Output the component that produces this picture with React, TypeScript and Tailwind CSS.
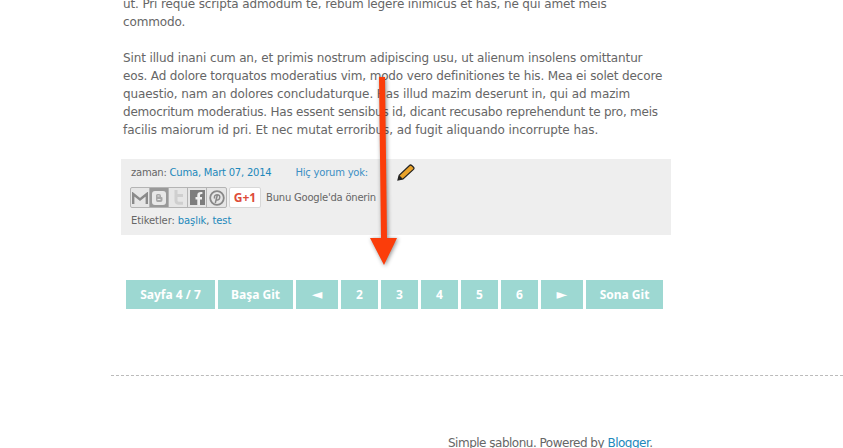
const pages = ['2', '3', '4', '5', '6']

function PagerButton({ label, width, arrow }: { label: string; width: string; arrow?: boolean }) {
  const textClass = arrow ? 'text-[14px]' : "font-['Noto_Sans',sans-serif] text-[12px] font-bold"
  return (
    <a className={`flex h-[29px] items-center justify-center bg-[#9dd8d2] text-white ${textClass} ${width}`}>
      {label}
    </a>
  )
}

function ShareIcons() {
  return (
    <div className="ml-[-1px] flex h-[21px] w-[97px] overflow-hidden rounded-[2px] border border-[#b4b4b4] bg-[#e6e6e6]">
      <span className="flex w-[19px] items-center justify-center border-r border-[#b4b4b4]">
        <svg width="16" height="12" viewBox="0 0 16 12">
          <path d="M1.200 12V2L8 7.500 14.800 2v10" fill="none" stroke="#8a8a8a" strokeWidth="2.400" />
        </svg>
      </span>
      <span className="flex w-[19px] items-center justify-center border-r border-[#b4b4b4] bg-[#999999]">
        <svg width="14" height="14" viewBox="0 0 14 14">
          <rect width="14" height="14" rx="3" fill="#e8e8e8" />
          <path d="M4 4.500Q4 3 5.500 3H7q2 0 2 2v1h.5q1 0 1 1v2q0 2-2 2h-3Q4 11 4 9z" fill="#a8a8a8" />
          <path d="M5.500 5h2M5.500 8.500h3" stroke="#e8e8e8" strokeWidth="1.200" />
        </svg>
      </span>
      <span className="flex w-[19px] items-center justify-center border-r border-[#b4b4b4]">
        <svg width="12" height="15" viewBox="0 0 12 15">
          <path d="M4 0v10.500q0 2.800 3 2.800h4M4 5.500h7" fill="none" stroke="#cfcfcf" strokeWidth="3" />
        </svg>
      </span>
      <span className="flex w-[19px] items-center justify-center border-r border-[#b4b4b4] bg-[#e6e6e6]">
        <svg width="15" height="15" viewBox="0 0 15 15">
          <rect width="15" height="15" fill="#7d7d7d" />
          <path d="M10 15V9.500h2V7h-2V5.300q0-1.500 2.400-1.200V2Q7.300 1.300 7.300 5.200V7H5.500v2.500h1.800V15z" fill="#efefef" />
        </svg>
      </span>
      <span className="flex flex-1 items-center justify-center">
        <svg width="16" height="16" viewBox="0 0 16 16">
          <circle cx="8" cy="8" r="6.800" fill="none" stroke="#888888" strokeWidth="1.800" />
          <path d="M6.300 13l1.900-7.500M5.600 8.500Q4.700 5 8 4.800q3.200 0 2.700 3-.6 2.700-3.300 2" fill="none" stroke="#888888" strokeWidth="1.500" />
        </svg>
      </span>
    </div>
  )
}

export default function App() {
  return (
    <div className="relative h-[448px] w-[843px] overflow-hidden bg-white font-['DejaVu_Sans',sans-serif] text-[#666666]">
      <div className="ml-[123px] mt-[-5px] whitespace-nowrap text-[12px] leading-[18px] tracking-[-0.13px]">
        <p>
          ut. Pri reque scripta admodum te, rebum legere inimicus et has, ne qui amet meis
          <br />
          commodo.
        </p>
        <p className="mt-[18px]">
          Sint illud inani cum an, et primis nostrum adipiscing usu, ut alienum insolens omittantur
          <br />
          <span className="tracking-[-0.15px]">eos. Ad dolore torquatos moderatius vim, modo vero definitiones te his. Mea ei solet decore</span>
          <br />
          <span className="tracking-[-0.09px]">quaestio, nam an dolores concludaturque. Has illud mazim deserunt in, qui ad mazim</span>
          <br />
          <span className="tracking-[-0.22px]">democritum moderatius. Has essent sensibus id, dicant recusabo reprehendunt te pro, meis</span>
          <br />
          <span className="tracking-[-0.07px]">facilis maiorum id pri. Et nec mutat erroribus, ad fugit aliquando incorrupte has.</span>
        </p>
      </div>

      <div className="ml-[121px] mt-[20px] h-[76px] w-[550px] bg-[#eeeeee] px-[10px] pt-[6px] text-[10px] tracking-[-0.22px] text-[#666666]">
        <div className="flex h-[14px] items-center">
          <span>
            zaman: <a className="text-[#2288bb]">Cuma, Mart 07, 2014</a>
          </span>
          <a className="ml-[24px] text-[#3b8fc4]">Hiç yorum yok:</a>
          <svg className="ml-[29px]" width="18" height="17" viewBox="0 0 18 17">
            <path d="M1 16l1.200-4.800L12.500 1.500q1-1 2.200 0l1.800 1.700q1 1.200 0 2.200L6 15z" fill="#eaa32a" stroke="#222222" strokeWidth="1.200" />
            <path d="M1 16l1.200-4.800L6 15z" fill="#222222" />
          </svg>
        </div>
        <div className="mt-[8px] flex items-center">
          <ShareIcons />
          <span className="ml-[2px] flex h-[21px] w-[32px] items-center justify-center rounded-[2px] border border-[#d8d8d8] bg-white font-['Noto_Sans',sans-serif] text-[12px] font-bold tracking-normal text-[#dd4b39]">
            G+1
          </span>
          <span className="ml-[5px]">Bunu Google'da önerin</span>
        </div>
        <div className="mt-[5px] tracking-[-0.1px]">
          Etiketler: <a className="text-[#2288bb]">başlık</a>, <a className="text-[#2288bb]">test</a>
        </div>
      </div>

      <nav className="ml-[126px] mt-[45px] flex gap-[3px]">
        <PagerButton label="Sayfa 4 / 7" width="w-[89px]" />
        <PagerButton label="Başa Git" width="w-[75px]" />
        <PagerButton label="◄" width="w-[42px]" arrow />
        {pages.map((page) => (
          <PagerButton key={page} label={page} width="w-[37px]" />
        ))}
        <PagerButton label="►" width="w-[42px]" arrow />
        <PagerButton label="Sona Git" width="w-[77px]" />
      </nav>

      <div className="ml-[111px] mt-[66px] border-t border-dashed border-[#bbbbbb]" />

      <p className="ml-[448px] mt-[58px] text-[12px] leading-[18px] tracking-[-0.5px]">
        Simple şablonu. Powered by <a className="text-[#2288bb]">Blogger</a>.
      </p>

      <svg className="absolute left-[360px] top-[70px] drop-shadow-[1px_1px_2px_rgba(0,0,0,0.45)]" width="50" height="205" viewBox="0 0 50 205">
        <path d="M19 7h6l2 161h10l-13 27-14-27h11z" fill="#fb3d0a" />
      </svg>
    </div>
  )
}
